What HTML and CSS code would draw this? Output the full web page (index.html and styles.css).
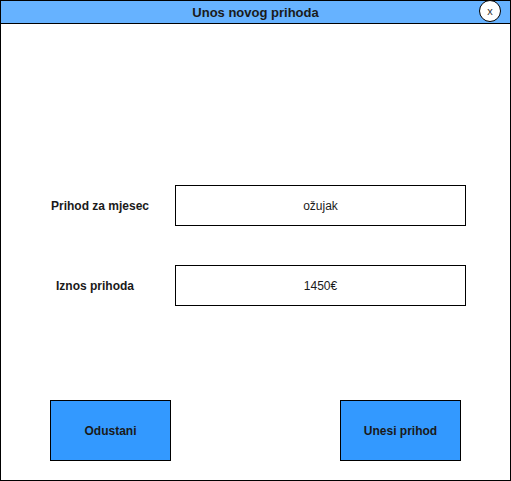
FILE: index.html
```html
<!DOCTYPE html>
<html>
<head>
<meta charset="utf-8">
<link rel="stylesheet" href="styles.css">
</head>
<body>
<div class="dialog">
  <div class="header">
    <span class="title">Unos novog prihoda</span>
    <span class="close">x</span>
  </div>
  <div class="content">
    <div class="row">
      <div class="label">Prihod za mjesec</div>
      <div class="field">ožujak</div>
    </div>
    <div class="row">
      <div class="label label-short">Iznos prihoda</div>
      <div class="field">1450€</div>
    </div>
    <div class="actions">
      <div class="btn">Odustani</div>
      <div class="btn">Unesi prihod</div>
    </div>
  </div>
</div>
</body>
</html>
```
FILE: styles.css
```css
html, body {
  margin: 0;
  padding: 0;
  background: #fff;
}
body {
  font-family: "Liberation Sans", Arial, sans-serif;
  font-size: 12px;
  color: #000;
}
.dialog {
  width: 511px;
  height: 481px;
  box-sizing: border-box;
  border: 1px solid #000;
  display: flex;
  flex-direction: column;
}
.header {
  position: relative;
  height: 22px;
  border-bottom: 1px solid #000;
  background: #66b2ff;
  display: flex;
  align-items: center;
  justify-content: center;
}
.title {
  font-weight: bold;
  font-size: 13px;
  color: #1a1a1a;
}
.close {
  position: absolute;
  left: 478px;
  top: -1px;
  width: 20px;
  height: 20px;
  border: 1px solid #000;
  border-radius: 50%;
  background: #fff;
  display: flex;
  align-items: center;
  justify-content: center;
  font-size: 11px;
  line-height: 1;
  color: #333;
}
.content {
  flex: 1;
  display: flex;
  flex-direction: column;
  padding-top: 161px;
}
.row {
  display: flex;
  align-items: center;
  height: 41px;
  margin-bottom: 39px;
}
.label {
  width: 124px;
  padding-left: 50px;
  font-weight: bold;
  color: #1a1a1a;
}
.label-short {
  width: 119px;
  padding-left: 55px;
}
.field {
  width: 289px;
  height: 39px;
  border: 1px solid #000;
  display: flex;
  align-items: center;
  justify-content: center;
  color: #1a1a1a;
}
.actions {
  display: flex;
  justify-content: space-between;
  padding: 0 49px;
  margin-top: 55px;
}
.btn {
  width: 119px;
  height: 59px;
  border: 1px solid #000;
  background: #3399ff;
  display: flex;
  align-items: center;
  justify-content: center;
  font-weight: bold;
  color: #1a1a1a;
}
```
